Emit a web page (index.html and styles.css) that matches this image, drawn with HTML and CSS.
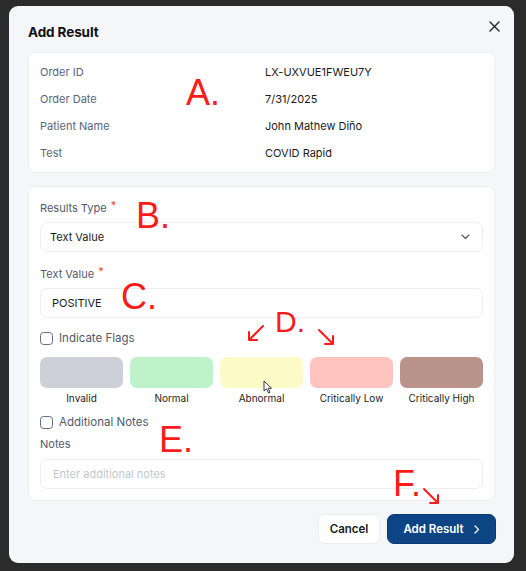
FILE: index.html
```html
<!DOCTYPE html>
<html>
<head>
<meta charset="utf-8">
<link rel="stylesheet" href="styles.css">
</head>
<body>
<div class="modal">
  <div class="header">
    <h2 class="title">Add Result</h2>
    <button class="close" aria-label="Close">
      <svg width="11" height="11" viewBox="0 0 11 11"><path d="M1 1L10 10M10 1L1 10" stroke="#1f2328" stroke-width="1.4" stroke-linecap="round"/></svg>
    </button>
  </div>

  <div class="card info">
    <div class="row"><span class="label">Order ID</span><span class="value">LX-UXVUE1FWEU7Y</span></div>
    <div class="row"><span class="label">Order Date</span><span class="value">7/31/2025</span></div>
    <div class="row"><span class="label">Patient Name</span><span class="value">John Mathew Diño</span></div>
    <div class="row"><span class="label">Test</span><span class="value">COVID Rapid</span></div>
  </div>

  <div class="card form">
    <div class="field-label">Results Type <span class="req">*</span></div>
    <div class="input select">
      <span>Text Value</span>
      <svg width="9" height="6" viewBox="0 0 9 6"><path d="M1 1L4.5 4.5L8 1" stroke="#4b5563" stroke-width="1.1" fill="none" stroke-linecap="round" stroke-linejoin="round"/></svg>
    </div>
    <div class="field-label second">Text Value <span class="req">*</span></div>
    <div class="input text"><span>POSITIVE</span></div>

    <label class="check first"><span class="box"></span>Indicate Flags</label>

    <div class="swatches">
      <div class="swatch"><div class="chip invalid"></div><span>Invalid</span></div>
      <div class="swatch"><div class="chip normal"></div><span>Normal</span></div>
      <div class="swatch"><div class="chip abnormal"></div><span>Abnormal</span></div>
      <div class="swatch"><div class="chip low"></div><span>Critically Low</span></div>
      <div class="swatch"><div class="chip high"></div><span>Critically High</span></div>
    </div>

    <label class="check notes-check"><span class="box"></span>Additional Notes</label>
    <div class="field-label notes-label">Notes</div>
    <div class="input notes"><span class="placeholder">Enter additional notes</span></div>
  </div>

  <div class="actions">
    <button class="btn cancel">Cancel</button>
    <button class="btn primary">Add Result
      <svg width="6" height="9" viewBox="0 0 6 9"><path d="M1 1L4.5 4.5L1 8" stroke="#ffffff" stroke-width="1.3" fill="none" stroke-linecap="round" stroke-linejoin="round"/></svg>
    </button>
  </div>
</div>

<div class="annot a">A.</div>
<div class="annot b">B.</div>
<div class="annot c">C.</div>
<div class="annot d">D.</div>
<div class="annot e">E.</div>
<div class="annot f">F.</div>
<svg class="arrow arrow1" width="20" height="20" viewBox="0 0 20 20"><path d="M17 2L3 16M3 16L3 8M3 16L11 16" stroke="#ff1a1a" stroke-width="2" fill="none" stroke-linecap="round"/></svg>
<svg class="arrow arrow2" width="20" height="20" viewBox="0 0 20 20"><path d="M3 3L17 17M17 17L17 9M17 17L9 17" stroke="#ff1a1a" stroke-width="2" fill="none" stroke-linecap="round"/></svg>
<svg class="arrow arrow3" width="20" height="20" viewBox="0 0 20 20"><path d="M3 3L17 17M17 17L17 9M17 17L9 17" stroke="#ff1a1a" stroke-width="2" fill="none" stroke-linecap="round"/></svg>
<svg class="cursor" width="10" height="14" viewBox="0 0 10 14"><path d="M1 1L1 11L3.5 8.8L5.5 13L7 12.3L5.2 8.3L8.5 8.2Z" fill="#ffffff" stroke="#222" stroke-width="0.9" stroke-linejoin="round"/></svg>
</body>
</html>
```

FILE: styles.css
```css
* { box-sizing: border-box; }
html, body { margin: 0; padding: 0; }
body {
  background: #2b2b2c;
  width: 526px;
  height: 571px;
  position: relative;
  overflow: hidden;
  font-family: Inter, "Noto Sans", "DejaVu Sans", sans-serif;
}
.modal {
  margin: 6px 0 0 9px;
  width: 505px;
  height: 557px;
  background: #f5f6fa;
  border-radius: 9px;
  padding: 16px 19px 19px 19px;
  display: flex;
  flex-direction: column;
}
.header {
  display: flex;
  justify-content: space-between;
  align-items: center;
  height: 20px;
}
.title {
  margin: 0;
  font-size: 13.5px;
  font-weight: 700;
  color: #111;
  letter-spacing: -0.1px;
}
.close {
  border: 0;
  background: none;
  padding: 0;
  margin-right: -5px;
  margin-top: -11px;
  display: flex;
}
.card {
  background: #fff;
  border: 1px solid #eceef2;
  border-radius: 7px;
}
.info {
  margin-top: 10px;
  padding: 5px 11px 6px 11px;
}
.row {
  display: grid;
  grid-template-columns: 225px 1fr;
  height: 27px;
  align-items: center;
  font-size: 11px;
}
.label { color: #5a6478; }
.value { color: #1a1a1a; }
.form {
  margin-top: 13px;
  padding: 11px 11px 11px 11px;
  display: flex;
  flex-direction: column;
}
.field-label {
  font-size: 11px;
  color: #4f5a6e;
  height: 20px;
  line-height: 20px;
}
.field-label.second { margin-top: 12px; }
.req { color: #ef4444; font-size: 11px; position: relative; top: -3px; margin-left: 1px; }
.input {
  margin-top: 4px;
  height: 30px;
  border: 1px solid #eceef2;
  border-radius: 7px;
  background: #fff;
  display: flex;
  align-items: center;
  font-size: 11px;
  color: #1a1a1a;
}
.select {
  justify-content: space-between;
  padding: 0 12px 0 9px;
}
.text { padding: 0 11px; }
.check {
  display: flex;
  align-items: center;
  height: 20px;
  font-size: 11.5px;
  color: #4f5a6e;
  gap: 6px;
}
.check.first { margin-top: 10px; }
.box {
  width: 13px;
  height: 13px;
  border: 1.4px solid #5d6d88;
  border-radius: 3.5px;
  background: #fff;
}
.swatches {
  margin-top: 9px;
  display: grid;
  grid-template-columns: repeat(5, 1fr);
  gap: 7px;
}
.swatch {
  display: flex;
  flex-direction: column;
  align-items: center;
}
.chip {
  width: 100%;
  height: 31px;
  border-radius: 7px;
}
.swatch span {
  margin-top: 3px;
  font-size: 10px;
  line-height: 14px;
  color: #222;
}
.invalid { background: #cdd0d9; }
.normal { background: #bff2c8; }
.abnormal { background: #fcfac7; }
.low { background: #ffc4be; }
.high { background: #b9938c; }
.notes-check { margin-top: 7px; }
.notes-label { margin-top: 2px; }
.input.notes { margin-top: 5px; padding: 0 12px; }
.placeholder { color: #c3c7cf; }
.actions {
  margin-top: 13px;
  display: flex;
  justify-content: flex-end;
  gap: 7px;
}
.btn {
  height: 30px;
  border-radius: 7px;
  font-family: inherit;
  font-size: 11.5px;
  font-weight: 600;
  display: flex;
  align-items: center;
  justify-content: center;
}
.cancel {
  width: 62px;
  background: #fff;
  border: 1px solid #eceef2;
  color: #1a1a1a;
}
.primary {
  width: 109px;
  background: #0d4483;
  border: 1px solid #0a3a72;
  color: #fff;
  gap: 10px;
  margin-right: -1px;
}
.annot {
  position: absolute;
  font-family: "Liberation Sans", Arial, sans-serif;
  font-size: 36px;
  line-height: 36px;
  color: #ff1a1a;
}
.a { left: 186px; top: 75px; }
.b { left: 136px; top: 198px; }
.c { left: 121px; top: 279px; }
.d { left: 275px; top: 307px; font-size: 30px; line-height: 30px; }
.e { left: 159px; top: 422px; }
.f { left: 393px; top: 466px; }
.arrow { position: absolute; }
.arrow1 { left: 246px; top: 324px; }
.arrow2 { left: 316px; top: 327px; }
.arrow3 { left: 421px; top: 486px; }
.cursor { position: absolute; left: 263px; top: 380px; }
```
